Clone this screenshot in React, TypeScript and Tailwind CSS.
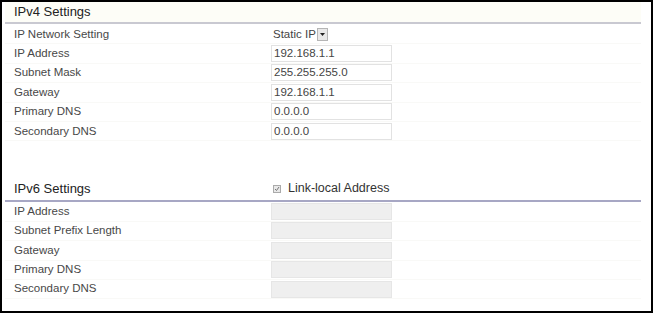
import React from 'react';

const ipv4Rows = [
  { label: 'IP Address', value: '192.168.1.1' },
  { label: 'Subnet Mask', value: '255.255.255.0' },
  { label: 'Gateway', value: '192.168.1.1' },
  { label: 'Primary DNS', value: '0.0.0.0' },
  { label: 'Secondary DNS', value: '0.0.0.0' },
];

const ipv6Rows = ['IP Address', 'Subnet Prefix Length', 'Gateway', 'Primary DNS', 'Secondary DNS'];

const Row: React.FC<{ label: string; children?: React.ReactNode }> = ({ label, children }) => (
  <div className="flex h-[19.4px] items-center border-b border-[#f9f9f7]">
    <div className="w-[266px] pl-[9px] text-[11.5px] text-[#484848]">{label}</div>
    <div className="flex items-center">{children}</div>
  </div>
);

const TextBox: React.FC<{ value?: string; disabled?: boolean }> = ({ value, disabled }) => (
  <div
    className={
      disabled
        ? 'h-[17px] w-[121px] border border-[#e6e6e6] bg-[#efefef]'
        : 'flex h-[17px] w-[121px] items-center border border-[#e2e2e2] bg-white pl-[2px] text-[11.5px] text-[#444]'
    }
  >
    {value}
  </div>
);

export default function App() {
  return (
    <div
      className="h-[313px] w-[653px] border-2 border-black bg-white"
      style={{ fontFamily: '"Liberation Sans", Arial, sans-serif' }}
    >
      <div className="pr-[10px] pl-[3px]">
        <div className="flex h-[20px] items-center bg-[#fdfdf7] pl-[9px] text-[13px] text-[#222]">
          IPv4 Settings
        </div>
        <div className="h-[2px] bg-[#c9c9d1]" />
        <div className="pt-[1px]">
          <Row label="IP Network Setting">
            <div className="flex items-center pl-[2px] text-[11.5px] text-[#444]">
              <span>Static IP</span>
              <span className="ml-[1px] flex h-[13px] w-[11px] items-center justify-center border border-[#b5b5b5] bg-[#e9e9e9]">
                <svg width="5" height="3" viewBox="0 0 5 3">
                  <path d="M0 0h5L2.5 3z" fill="#222" />
                </svg>
              </span>
            </div>
          </Row>
          {ipv4Rows.map((r) => (
            <Row key={r.label} label={r.label}>
              <TextBox value={r.value} />
            </Row>
          ))}
        </div>
        <div className="h-[37px]" />
        <div className="flex h-[22px] items-start pt-[1px]">
          <div className="w-[266px] pl-[9px] text-[13px] text-[#222]">IPv6 Settings</div>
          <div className="flex items-center gap-[7px] pl-[2px] text-[12.5px] text-[#333]">
            <span className="flex h-[8px] w-[8px] items-center justify-center border border-[#aaa] bg-[#e8e8e8]">
              <svg width="6" height="6" viewBox="0 0 6 6">
                <path d="M1 3l1.5 1.5L5 1" stroke="#777" strokeWidth="1" fill="none" />
              </svg>
            </span>
            <span>Link-local Address</span>
          </div>
        </div>
        <div className="h-[2px] bg-[#a7a7c4]" />
        {ipv6Rows.map((l) => (
          <Row key={l} label={l}>
            <TextBox disabled />
          </Row>
        ))}
      </div>
    </div>
  );
}
